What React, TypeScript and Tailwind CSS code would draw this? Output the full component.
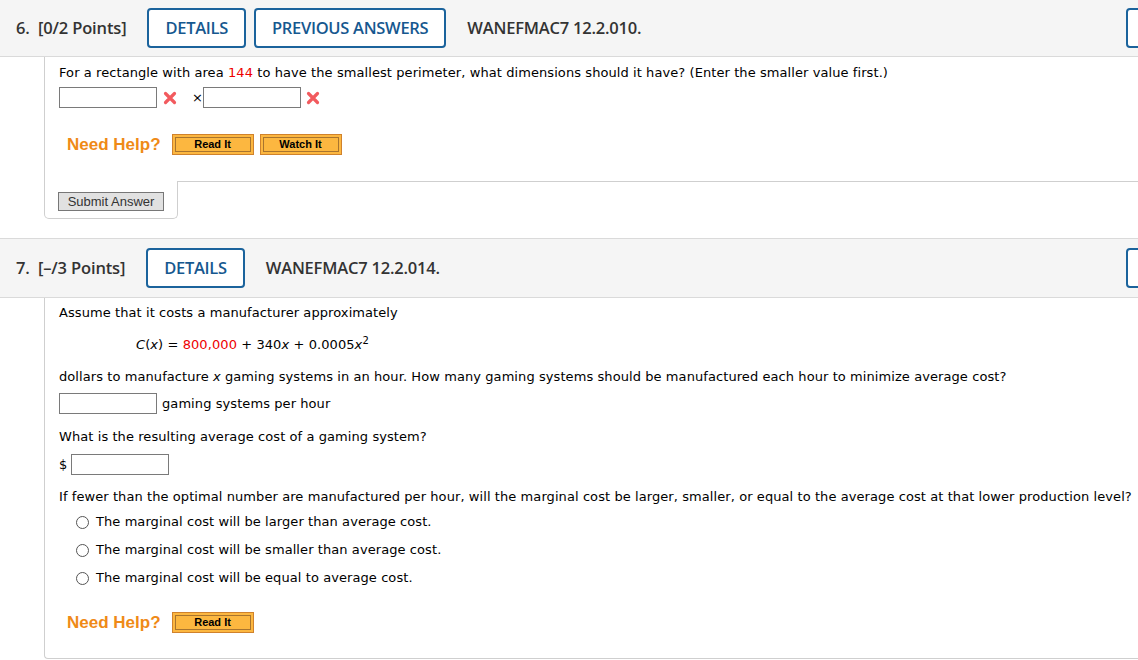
const body = { fontFamily: '"DejaVu Sans", Verdana, sans-serif', letterSpacing: '0.08px' };
const head = { fontFamily: '"Open Sans", "Noto Sans", sans-serif' };
const arial = { fontFamily: '"Liberation Sans", Arial, sans-serif', letterSpacing: '0' };

function WrongMark() {
  return (
    <svg width="14" height="14" viewBox="0 0 14 14" className="shrink-0">
      <path d="M2.5 2.5 L11.5 11.5 M11.5 2.5 L2.5 11.5" stroke="#f25a5e" strokeWidth="3.2" strokeLinecap="round" />
    </svg>
  );
}

function TextBox({ w = 'w-[98px]' }: { w?: string }) {
  return <div className={`${w} h-[21px] border border-[#7a7a7a] bg-white shrink-0`} />;
}

function HelpButton({ label, w }: { label: string; w: string }) {
  return (
    <button
      className={`${w} h-[21px] border border-[#d0822c] bg-[#fcb740] p-[2px] flex`}
      style={arial}
    >
      <span className="flex-1 border border-[#a8742e] flex items-center justify-center text-[11px] font-bold text-black leading-none">
        {label}
      </span>
    </button>
  );
}

function NeedHelp({ buttons }: { buttons: { label: string; w: string }[] }) {
  return (
    <div className="flex items-center pl-[8px]">
      <span className="text-[17px] font-bold text-[#ef8a17] mr-[11px] leading-none" style={arial}>
        Need Help?
      </span>
      <div className="flex gap-[6px]">
        {buttons.map((b) => (
          <HelpButton key={b.label} label={b.label} w={b.w} />
        ))}
      </div>
    </div>
  );
}

function OutlineButton({ label }: { label: string }) {
  return (
    <button className="h-[40px] px-[16px] border-2 border-[#1b639c] rounded-[4px] bg-white text-[16.5px] font-semibold text-[#16588f] shrink-0 tracking-[-0.3px]">
      {label}
    </button>
  );
}

function QuestionHeader({ num, points, buttons, code, h }: { num: string; points: string; buttons: string[]; code: string; h: string }) {
  return (
    <div className={`${h} bg-[#f5f5f5] border-b border-[#dadada] flex items-center pl-[16px]`} style={head}>
      <span className="text-[16.5px] font-semibold text-[#333] whitespace-pre mr-[21px] tracking-[-0.15px]">
        {num}{'  '}{points}
      </span>
      <div className="flex gap-[8px] mr-[21px]">
        {buttons.map((b) => (
          <OutlineButton key={b} label={b} />
        ))}
      </div>
      <span className="text-[16.5px] font-semibold text-[#333] tracking-[-0.2px]">{code}</span>
      <div className="ml-auto -mr-[88px] w-[100px] h-[40px] border-2 border-[#1b639c] rounded-[4px] bg-white shrink-0" />
    </div>
  );
}

function Radio({ text }: { text: string }) {
  return (
    <div className="h-[28px] flex items-center pl-[17px]">
      <span className="w-[13px] h-[13px] rounded-full border border-[#555] bg-white mr-[7px] shrink-0" />
      <span>{text}</span>
    </div>
  );
}

export default function App() {
  return (
    <div className="w-full h-[660px] overflow-hidden bg-white text-[13px] leading-[18px] text-black" style={body}>
      <QuestionHeader
        num="6."
        points="[0/2 Points]"
        buttons={['DETAILS', 'PREVIOUS ANSWERS']}
        code="WANEFMAC7 12.2.010."
        h="h-[57px]"
      />

      <div className="ml-[44px]">
        <div className="border-l border-[#cfcfcf] pl-[14px] pt-[7px]">
          <p>
            For a rectangle with area <span className="text-[#ee0000]">144</span> to have the smallest perimeter, what
            dimensions should it have? (Enter the smaller value first.)
          </p>
          <div className="flex items-center mt-[5px]">
            <TextBox />
            <span className="ml-[6px]"><WrongMark /></span>
            <span className="ml-[15px] mr-0 text-[13px]">×</span>
            <TextBox />
            <span className="ml-[5px]"><WrongMark /></span>
          </div>
          <div className="mt-[26px] pb-[26px]">
            <NeedHelp buttons={[{ label: 'Read It', w: 'w-[82px]' }, { label: 'Watch It', w: 'w-[82px]' }]} />
          </div>
        </div>
        <div className="flex">
          <div className="w-[134px] h-[38px] border-l border-r border-b border-[#cfcfcf] rounded-b-[5px] pl-[13px] pt-[11px] shrink-0">
            <button
              className="w-[106px] h-[19px] border border-[#777] bg-[#e1e1e1] text-[13px] text-[#333] leading-none"
              style={arial}
            >
              Submit Answer
            </button>
          </div>
          <div className="flex-1 border-t border-[#cfcfcf]" />
        </div>
      </div>

      <div className="mt-[19px] border-t border-[#dadada]">
        <QuestionHeader
          num="7."
          points="[–/3 Points]"
          buttons={['DETAILS']}
          code="WANEFMAC7 12.2.014."
          h="h-[59px]"
        />
      </div>

      <div className="ml-[44px] border-l border-b border-[#cfcfcf] rounded-bl-[4px] pl-[14px] pt-[6px] pb-[25px]">
        <p>Assume that it costs a manufacturer approximately</p>
        <p className="mt-[14px] ml-[77px]">
          <i>C</i>(<i>x</i>) = <span className="text-[#ee0000]">800,000</span> + 340<i>x</i> + 0.0005<i>x</i>
          <sup className="text-[10px]">2</sup>
        </p>
        <p className="mt-[14px]">
          dollars to manufacture <i>x</i> gaming systems in an hour. How many gaming systems should be manufactured each
          hour to minimize average cost?
        </p>
        <div className="flex items-center mt-[7px]">
          <TextBox />
          <span className="ml-[5px]">gaming systems per hour</span>
        </div>
        <p className="mt-[14px]">What is the resulting average cost of a gaming system?</p>
        <div className="flex items-center mt-[8px]">
          <span className="mr-[4px]">$</span>
          <TextBox />
        </div>
        <p className="mt-[13px] whitespace-nowrap">
          If fewer than the optimal number are manufactured per hour, will the marginal cost be larger, smaller, or equal
          to the average cost at that lower production level?
        </p>
        <div className="mt-[2px]">
          <Radio text="The marginal cost will be larger than average cost." />
          <Radio text="The marginal cost will be smaller than average cost." />
          <Radio text="The marginal cost will be equal to average cost." />
        </div>
        <div className="mt-[20px]">
          <NeedHelp buttons={[{ label: 'Read It', w: 'w-[82px]' }]} />
        </div>
      </div>
    </div>
  );
}
